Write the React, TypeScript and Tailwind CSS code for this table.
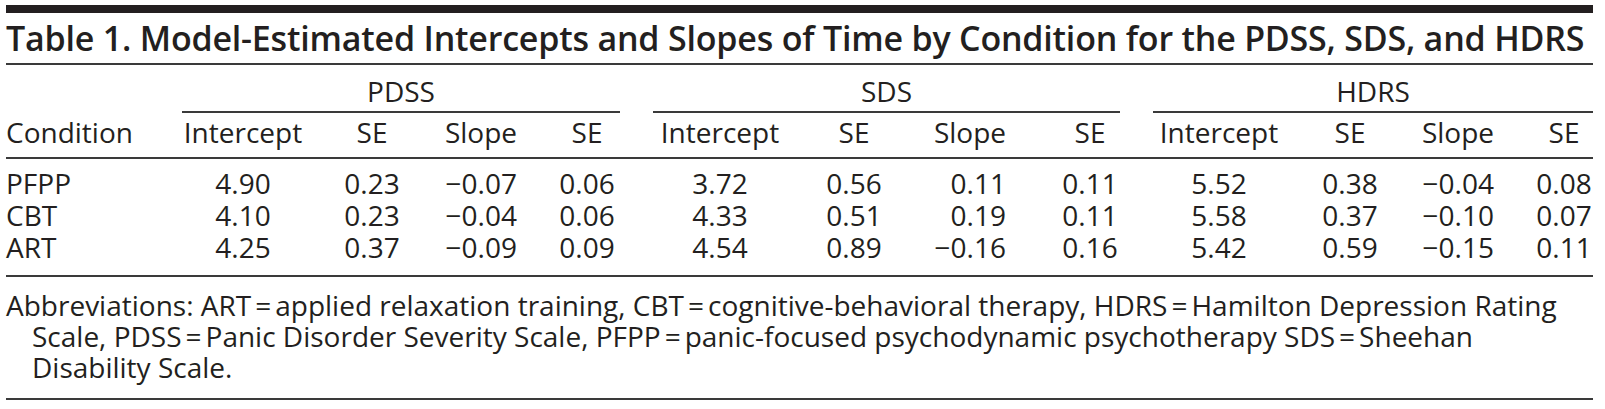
import React from "react";

const COLS = [
  "w-[124px] ml-0",
  "w-[64px] ml-[35px]",
  "w-[84px] ml-[35px]",
  "w-[64px] ml-[32px]",
  "w-[124px] ml-[39px]",
  "w-[64px] ml-[40px]",
  "w-[84px] ml-[42px]",
  "w-[64px] ml-[46px]",
  "w-[124px] ml-[35px]",
  "w-[64px] ml-[37px]",
  "w-[84px] ml-[34px]",
  "w-[56px] ml-[36px]",
];

const HEADERS = ["Intercept", "SE", "Slope", "SE", "Intercept", "SE", "Slope", "SE", "Intercept", "SE", "Slope", "SE"];

const ROWS: string[][] = [
  ["PFPP", "4.90", "0.23", "\u22120.07", "0.06", "3.72", "0.56", "0.11", "0.11", "5.52", "0.38", "\u22120.04", "0.08"],
  ["CBT", "4.10", "0.23", "\u22120.04", "0.06", "4.33", "0.51", "0.19", "0.11", "5.58", "0.37", "\u22120.10", "0.07"],
  ["ART", "4.25", "0.37", "\u22120.09", "0.09", "4.54", "0.89", "\u22120.16", "0.16", "5.42", "0.59", "\u22120.15", "0.11"],
];

function Eq() {
  return <span className="mx-[4px]">=</span>;
}

function Rule() {
  return <div className="h-[2px] bg-[#3a3a3a]" />;
}

export default function App() {
  return (
    <div
      className="bg-white text-[#231f20] px-[6px] pt-[5px] w-[1605px] h-[409px] overflow-hidden"
      style={{ fontFamily: '"Open Sans", "Noto Sans", sans-serif' }}
    >
      <div className="w-[1587px]">
        <div className="h-[8px] bg-[#231f20]" />
        <div className="mt-[5px] mb-[5px] h-[40px] leading-[40px] text-[34px] font-semibold whitespace-nowrap tracking-[-0.2px]">
          Table 1. Model-Estimated Intercepts and Slopes of Time by Condition for the PDSS, SDS, and HDRS
        </div>
        <Rule />

        <div className="text-[28px] leading-[34px] whitespace-nowrap">
          <div className="flex mt-[9px]">
            <div className="w-[176px] shrink-0" />
            <div className="w-[438px] shrink-0 text-center pb-[3px] border-b-2 border-[#3a3a3a]">PDSS</div>
            <div className="w-[467px] shrink-0 ml-[33px] text-center pb-[3px] border-b-2 border-[#3a3a3a]">SDS</div>
            <div className="w-[440px] shrink-0 ml-[33px] text-center pb-[3px] border-b-2 border-[#3a3a3a]">HDRS</div>
          </div>

          <div className="flex mt-[2px] pb-[8px] border-b-2 border-[#3a3a3a]">
            <div className="w-[175px] shrink-0">Condition</div>
            {HEADERS.map((h, i) => (
              <div key={i} className={`${COLS[i]} shrink-0 text-center`}>
                {h}
              </div>
            ))}
          </div>

          <div className="pt-[8px] pb-[12px] border-b-2 border-[#3a3a3a]">
            {ROWS.map((r, ri) => (
              <div key={ri} className="flex h-[32px] leading-[32px]">
                <div className="w-[175px] shrink-0">{r[0]}</div>
                {r.slice(1).map((v, i) => (
                  <div key={i} className={`${COLS[i]} shrink-0 flex justify-center`}>
                    {i % 4 === 2 ? (
                      <span className="inline-block w-[72px] text-right">{v}</span>
                    ) : (
                      <span>{v}</span>
                    )}
                  </div>
                ))}
              </div>
            ))}
          </div>
        </div>

        <div className="pt-[13px] pb-[15px] text-[28px] leading-[31px] whitespace-nowrap border-b-2 border-[#3a3a3a]">
          <div>
            Abbreviations: ART<Eq />applied relaxation training, CBT<Eq />cognitive-behavioral therapy, HDRS<Eq />Hamilton Depression Rating
          </div>
          <div className="pl-[26px]">
            Scale, PDSS<Eq />Panic Disorder Severity Scale, PFPP<Eq />panic-focused psychodynamic psychotherapy SDS<Eq />Sheehan
          </div>
          <div className="pl-[26px]">Disability Scale.</div>
        </div>
      </div>
    </div>
  );
}
